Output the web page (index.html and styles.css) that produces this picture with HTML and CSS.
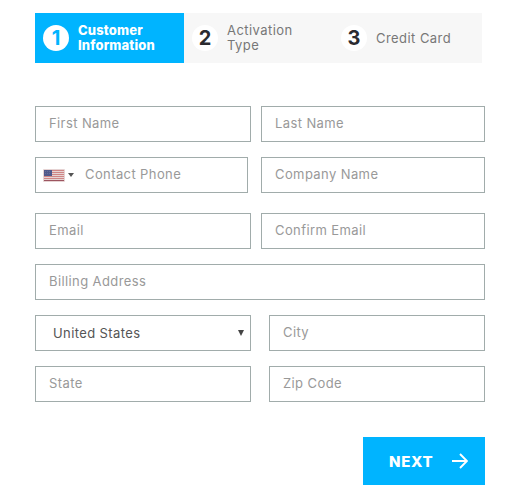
FILE: index.html
```html
<!DOCTYPE html>
<html lang="en">
<head>
  <meta charset="utf-8">
  <title>Customer Information</title>
  <link rel="stylesheet" href="styles.css">
</head>
<body>
  <div class="steps">
    <div class="step active">
      <span class="num">1</span>
      <span class="label">Customer<br>Information</span>
    </div>
    <div class="step">
      <span class="num">2</span>
      <span class="label">Activation<br>Type</span>
    </div>
    <div class="step">
      <span class="num">3</span>
      <span class="label">Credit Card</span>
    </div>
  </div>

  <form class="form">
    <div class="row">
      <input class="field" type="text" placeholder="First Name">
      <input class="field wide" type="text" placeholder="Last Name">
    </div>
    <div class="row phone-row">
      <div class="field phone">
        <svg class="flag" width="22" height="13" viewBox="0 0 22 13">
          <rect width="22" height="13" rx="1" fill="#e6d3d3"/>
          <path d="M1 1.5h20M1 3.5h20M1 5.5h20M1 7.5h20M1 9.5h20" stroke="#cf8585"/>
          <path d="M1 11.5h20" stroke="#9c5560"/>
          <rect x="1" y="1" width="8" height="6" fill="#50598b"/>
          <path d="M2 2.5h6M2 4.5h6" stroke="#666d98" stroke-dasharray="1 1"/>
        </svg>
        <svg class="caret" width="6" height="4" viewBox="0 0 6 4"><path d="M0 0h6L3 4z" fill="#555"/></svg>
        <input class="phone-input" type="text" placeholder="Contact Phone">
      </div>
      <input class="field wide" type="text" placeholder="Company Name">
    </div>
    <div class="row">
      <input class="field" type="text" placeholder="Email">
      <input class="field wide" type="text" placeholder="Confirm Email">
    </div>
    <div class="row">
      <input class="field full" type="text" placeholder="Billing Address">
    </div>
    <div class="row">
      <div class="field select">
        <span>United States</span>
        <svg width="6" height="6" viewBox="0 0 6 6"><path d="M0 0h6L3 6z" fill="#444"/></svg>
      </div>
      <input class="field" type="text" placeholder="City">
    </div>
    <div class="row">
      <input class="field" type="text" placeholder="State">
      <input class="field" type="text" placeholder="Zip Code">
    </div>
    <button class="next" type="button">
      NEXT
      <svg width="16" height="16" viewBox="0 0 16 16"><path d="M0 8h15M8 1l7 7-7 7" fill="none" stroke="#fff" stroke-width="1.9"/></svg>
    </button>
  </form>
</body>
</html>
```

FILE: styles.css
```css
* { box-sizing: border-box; }
body { margin: 0; padding: 13px 34px 0 35px; background: #fff; font-family: Inter, "Liberation Sans", sans-serif; font-size: 13px; }

.steps { display: flex; width: 447px; height: 50px; background: #f7f7f7; }
.step { display: flex; align-items: center; width: 149px; padding-left: 8px; color: #777; line-height: 15px; letter-spacing: 0.45px; }
.active { background: #00b4ff; color: #fff; font-weight: 800; letter-spacing: 0.15px; }
.num { width: 26px; height: 26px; margin-right: 9px; border-radius: 50%; background: #fff; color: #2b2b30; font-size: 20px; font-weight: 700; line-height: 26px; text-align: center; letter-spacing: 0; }
.active .num { color: #00b4ff; }

.form { display: flex; flex-direction: column; gap: 15px; margin-top: 43px; }
.row { display: flex; justify-content: space-between; width: 450px; height: 36px; }
.phone-row { margin-bottom: 5px; }
.field { width: 216px; height: 36px; padding: 0 12px 2px 13px; border: 1px solid #a1acab; border-radius: 0; background: #fff; font: inherit; letter-spacing: 0.4px; outline: 0; }
.wide { width: 224px; }
.full { width: 450px; }
input::placeholder { color: #999; opacity: 1; }

.phone { display: flex; align-items: center; width: 213px; padding: 0 0 0 7px; }
.caret { margin: 0 11px 0 3px; }
.phone-input { flex: 1; min-width: 0; height: 32px; margin-bottom: 2px; padding: 0; border: 0; font: inherit; letter-spacing: 0.4px; outline: 0; }

.select { display: flex; align-items: center; justify-content: space-between; padding: 0 6px 1px 17px; color: #555; }

.next { display: flex; align-items: center; justify-content: space-between; width: 122px; height: 48px; margin: 20px 0 0 328px; padding: 0 17px 0 26px; border: 0; background: #00b4ff; color: #fff; font: 800 15px Inter, "Liberation Sans", sans-serif; letter-spacing: 0.7px; }
```
